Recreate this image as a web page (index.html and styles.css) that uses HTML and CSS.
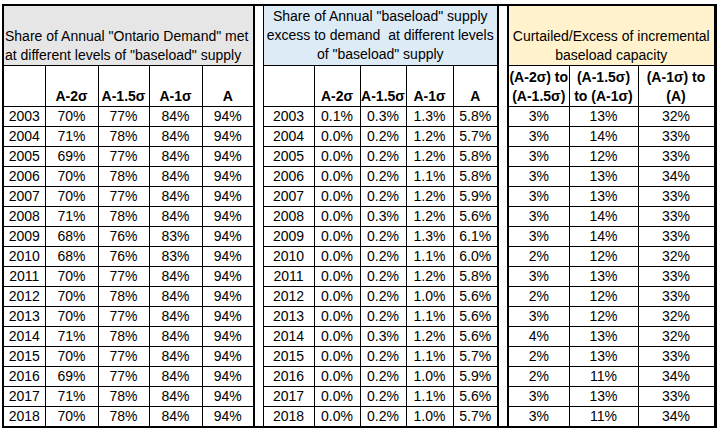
FILE: index.html
```html
<!DOCTYPE html>
<html>
<head>
<meta charset="utf-8">
<link rel="stylesheet" href="styles.css">
</head>
<body>
<table class="sheet">
  <colgroup>
    <col class="c-y1"><col class="c-a"><col class="c-b"><col class="c-a"><col class="c-d">
    <col class="c-gap1">
    <col class="c-y2"><col class="c-e"><col class="c-e"><col class="c-f"><col class="c-g">
    <col class="c-gap2">
    <col class="c-h"><col class="c-i"><col class="c-j">
  </colgroup>
  <tr class="h1">
    <th colspan="5" class="title t1 g1r">Share of Annual "Ontario Demand" met<br>at different levels of "baseload" supply</th>
    <td rowspan="18" class="gap gap1"></td>
    <th colspan="5" class="title t2 g2l g2r">Share of Annual "baseload" supply<br>excess to demand&nbsp; at different levels<br>of "baseload" supply</th>
    <td rowspan="18" class="gap gap2"></td>
    <th colspan="3" class="title t3 g3l g3r">Curtailed/Excess of incremental<br>baseload capacity</th>
  </tr>
  <tr class="h2">
    <th></th><th>A-2σ</th><th>A-1.5σ</th><th>A-1σ</th><th class="g1r">A</th>
    <th class="g2l"></th><th>A-2σ</th><th>A-1.5σ</th><th>A-1σ</th><th class="g2r">A</th>
    <th class="g3l">(A-2σ) to<br>(A-1.5σ)</th><th>(A-1.5σ)<br>to (A-1σ)</th><th class="g3r">(A-1σ) to<br>(A)</th>
  </tr>
  <tr><td>2003</td><td>70%</td><td>77%</td><td>84%</td><td class="g1r">94%</td><td class="g2l">2003</td><td>0.1%</td><td>0.3%</td><td>1.3%</td><td class="g2r">5.8%</td><td class="g3l">3%</td><td>13%</td><td class="g3r">32%</td></tr>
  <tr><td>2004</td><td>71%</td><td>78%</td><td>84%</td><td class="g1r">94%</td><td class="g2l">2004</td><td>0.0%</td><td>0.2%</td><td>1.2%</td><td class="g2r">5.7%</td><td class="g3l">3%</td><td>14%</td><td class="g3r">33%</td></tr>
  <tr><td>2005</td><td>69%</td><td>77%</td><td>84%</td><td class="g1r">94%</td><td class="g2l">2005</td><td>0.0%</td><td>0.2%</td><td>1.2%</td><td class="g2r">5.8%</td><td class="g3l">3%</td><td>12%</td><td class="g3r">33%</td></tr>
  <tr><td>2006</td><td>70%</td><td>78%</td><td>84%</td><td class="g1r">94%</td><td class="g2l">2006</td><td>0.0%</td><td>0.2%</td><td>1.1%</td><td class="g2r">5.8%</td><td class="g3l">3%</td><td>13%</td><td class="g3r">34%</td></tr>
  <tr><td>2007</td><td>70%</td><td>77%</td><td>84%</td><td class="g1r">94%</td><td class="g2l">2007</td><td>0.0%</td><td>0.2%</td><td>1.2%</td><td class="g2r">5.9%</td><td class="g3l">3%</td><td>13%</td><td class="g3r">33%</td></tr>
  <tr><td>2008</td><td>71%</td><td>78%</td><td>84%</td><td class="g1r">94%</td><td class="g2l">2008</td><td>0.0%</td><td>0.3%</td><td>1.2%</td><td class="g2r">5.6%</td><td class="g3l">3%</td><td>14%</td><td class="g3r">33%</td></tr>
  <tr><td>2009</td><td>68%</td><td>76%</td><td>83%</td><td class="g1r">94%</td><td class="g2l">2009</td><td>0.0%</td><td>0.2%</td><td>1.3%</td><td class="g2r">6.1%</td><td class="g3l">3%</td><td>14%</td><td class="g3r">33%</td></tr>
  <tr><td>2010</td><td>68%</td><td>76%</td><td>83%</td><td class="g1r">94%</td><td class="g2l">2010</td><td>0.0%</td><td>0.2%</td><td>1.1%</td><td class="g2r">6.0%</td><td class="g3l">2%</td><td>12%</td><td class="g3r">32%</td></tr>
  <tr><td>2011</td><td>70%</td><td>77%</td><td>84%</td><td class="g1r">94%</td><td class="g2l">2011</td><td>0.0%</td><td>0.2%</td><td>1.2%</td><td class="g2r">5.8%</td><td class="g3l">3%</td><td>13%</td><td class="g3r">33%</td></tr>
  <tr><td>2012</td><td>70%</td><td>78%</td><td>84%</td><td class="g1r">94%</td><td class="g2l">2012</td><td>0.0%</td><td>0.2%</td><td>1.0%</td><td class="g2r">5.6%</td><td class="g3l">2%</td><td>12%</td><td class="g3r">33%</td></tr>
  <tr><td>2013</td><td>70%</td><td>77%</td><td>84%</td><td class="g1r">94%</td><td class="g2l">2013</td><td>0.0%</td><td>0.2%</td><td>1.1%</td><td class="g2r">5.6%</td><td class="g3l">3%</td><td>12%</td><td class="g3r">32%</td></tr>
  <tr><td>2014</td><td>71%</td><td>78%</td><td>84%</td><td class="g1r">94%</td><td class="g2l">2014</td><td>0.0%</td><td>0.3%</td><td>1.2%</td><td class="g2r">5.6%</td><td class="g3l">4%</td><td>13%</td><td class="g3r">32%</td></tr>
  <tr><td>2015</td><td>70%</td><td>77%</td><td>84%</td><td class="g1r">94%</td><td class="g2l">2015</td><td>0.0%</td><td>0.2%</td><td>1.1%</td><td class="g2r">5.7%</td><td class="g3l">2%</td><td>13%</td><td class="g3r">33%</td></tr>
  <tr><td>2016</td><td>69%</td><td>77%</td><td>84%</td><td class="g1r">94%</td><td class="g2l">2016</td><td>0.0%</td><td>0.2%</td><td>1.0%</td><td class="g2r">5.9%</td><td class="g3l">2%</td><td>11%</td><td class="g3r">34%</td></tr>
  <tr><td>2017</td><td>71%</td><td>78%</td><td>84%</td><td class="g1r">94%</td><td class="g2l">2017</td><td>0.0%</td><td>0.2%</td><td>1.1%</td><td class="g2r">5.6%</td><td class="g3l">3%</td><td>13%</td><td class="g3r">33%</td></tr>
  <tr><td>2018</td><td>70%</td><td>78%</td><td>84%</td><td class="g1r">94%</td><td class="g2l">2018</td><td>0.0%</td><td>0.2%</td><td>1.0%</td><td class="g2r">5.7%</td><td class="g3l">3%</td><td>11%</td><td class="g3r">34%</td></tr>
</table>
</body>
</html>
```

FILE: styles.css
```css
html, body {
  margin: 0;
  padding: 0;
  background: #ffffff;
}

body {
  font-family: "Liberation Sans", Arial, sans-serif;
  font-size: 14px;
  color: #000000;
}

.sheet {
  border-collapse: collapse;
  table-layout: fixed;
  margin: 4px 0 0 2px;
  border: 2px solid #000;
}

.sheet td,
.sheet th {
  border: 1px solid #000;
  padding: 0;
  text-align: center;
  white-space: nowrap;
  overflow: hidden;
  line-height: 19px;
}

.sheet th {
  font-weight: bold;
  vertical-align: bottom;
}

.sheet td {
  vertical-align: middle;
}

.c-y1 { width: 42px; }
.c-a { width: 53px; }
.c-b { width: 51px; }
.c-d { width: 52px; }
.c-gap1 { width: 9px; }
.c-y2 { width: 51px; }
.c-e { width: 46px; }
.c-f { width: 47px; }
.c-g { width: 45px; }
.c-gap2 { width: 10px; }
.c-h { width: 61px; }
.c-i { width: 69px; }
.c-j { width: 77px; }

.h1 { height: 60px; }
.h2 { height: 41px; }
.sheet tr { height: 20px; }
.sheet tr.h1 { height: 60px; }
.sheet tr.h2 { height: 41px; }

.sheet .title {
  font-weight: normal;
  vertical-align: bottom;
}

.sheet .t1 {
  background: #e7e6e6;
  text-align: left;
  padding-left: 1px;
}

.sheet .t2 {
  background: #ddebf7;
  vertical-align: middle;
}

.sheet .t3 {
  background: #fff2cc;
}

.sheet .gap {
  background: #fff;
  border-top: 2px solid #000;
  border-bottom: 2px solid #000;
}

.sheet .gap1 {
  border-left: 2px solid #000;
  border-right: 1px solid #000;
}

.sheet .gap2 {
  border-left: 2px solid #000;
  border-right: 2px solid #000;
}

.sheet .g1r { border-right: 2px solid #000; }
.sheet .g2r { border-right: 2px solid #000; }
.sheet .g3l { border-left: 2px solid #000; }
.sheet .g3r { border-right: 3px solid #000; }
```
